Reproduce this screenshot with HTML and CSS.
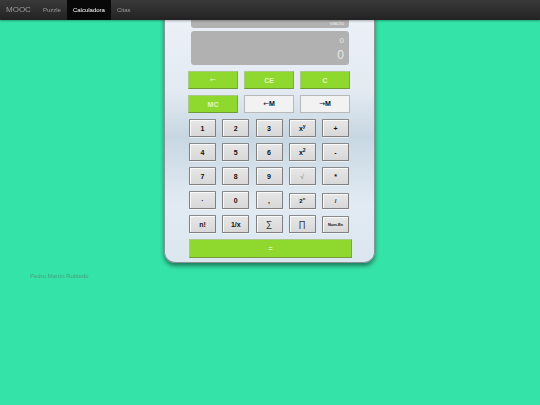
FILE: index.html
```html
<!DOCTYPE html>
<html lang="es">
<head>
<meta charset="utf-8">
<title>Calculadora</title>
<link rel="stylesheet" href="styles.css">
</head>
<body>
<nav class="navbar">
  <span class="brand">MOOC</span>
  <a class="nav-link">Puzzle</a>
  <a class="nav-link active">Calculadora</a>
  <a class="nav-link">Citas</a>
</nav>
<main class="page">
  <div class="calc">
    <div class="display display-top"><span class="small">vacío</span></div>
    <div class="display display-main">
      <span class="mem">0</span>
      <span class="value">0</span>
    </div>
    <div class="row3">
      <button class="btn green"><span class="arrow">←</span></button>
      <button class="btn green">CE</button>
      <button class="btn green">C</button>
    </div>
    <div class="row3">
      <button class="btn green">MC</button>
      <button class="btn white"><span class="arrow">←</span>M</button>
      <button class="btn white"><span class="arrow">→</span>M</button>
    </div>
    <div class="keys">
      <button class="key">1</button>
      <button class="key">2</button>
      <button class="key">3</button>
      <button class="key">x<sup>y</sup></button>
      <button class="key">+</button>
      <button class="key">4</button>
      <button class="key">5</button>
      <button class="key">6</button>
      <button class="key">x<sup>2</sup></button>
      <button class="key">-</button>
      <button class="key">7</button>
      <button class="key">8</button>
      <button class="key">9</button>
      <button class="key light">√</button>
      <button class="key">*</button>
      <button class="key">·</button>
      <button class="key">0</button>
      <button class="key">,</button>
      <button class="key small-key">2<sup>n</sup></button>
      <button class="key small-key">/</button>
      <button class="key">n!</button>
      <button class="key">1/x</button>
      <button class="key sym">∑</button>
      <button class="key sym">∏</button>
      <button class="key tiny">Num.En</button>
    </div>
    <button class="btn green equals">=</button>
  </div>
  <footer class="footer">Pedro Martín Robledo</footer>
</main>
</body>
</html>
```

FILE: styles.css
```css
* { box-sizing: border-box; }
html, body {
  margin: 0;
  padding: 0;
  background: #34e3a7;
  font-family: "Liberation Sans", Arial, sans-serif;
}
.navbar {
  position: fixed;
  top: 0;
  left: 0;
  right: 0;
  height: 20px;
  background: linear-gradient(#3a3a3a, #222);
  display: flex;
  align-items: stretch;
  padding-left: 6px;
  z-index: 10;
  box-shadow: 0 1px 2px rgba(0,0,0,0.3);
}
.brand {
  color: #9d9d9d;
  font-size: 8px;
  line-height: 20px;
  margin-right: 6px;
}
.nav-link {
  color: #9d9d9d;
  font-size: 6px;
  line-height: 20px;
  padding: 0 6px;
}
.nav-link.active {
  color: #fff;
  background: #080808;
}
.calc {
  width: 211px;
  margin-left: 164px;
  padding: 8px 24px 4px 24px;
  background: linear-gradient(#eef2f8 0%, #e3eaf2 35%, #c7d7e2 52%, #e2ebf3 78%, #dbe6ef 100%);
  border: 1px solid #8a9298;
  border-top: none;
  border-radius: 0 0 11px 11px;
  box-shadow: 0 3px 4px rgba(0,0,0,0.45);
  display: flex;
  flex-direction: column;
}
.display {
  background: #b1b1b1;
  border-radius: 3px;
  color: #e8e8e8;
  text-align: right;
  margin: 0 1px 0 2px;
  display: flex;
  flex-direction: column;
  align-items: flex-end;
  padding: 0 5px;
}
.display-top {
  height: 20px;
  justify-content: flex-end;
  border-radius: 0 0 3px 3px;
}
.display-top .small {
  font-size: 6px;
  line-height: 8px;
  padding-bottom: 1px;
}
.display-main {
  height: 34px;
  margin-top: 3px;
  justify-content: center;
}
.display-main .mem {
  font-size: 8px;
  line-height: 15px;
}
.display-main .value {
  font-size: 12px;
  line-height: 15px;
}
.row3 {
  display: grid;
  grid-template-columns: repeat(3, 1fr);
  gap: 6px;
  margin-top: 6px;
  margin-left: -1px;
}
.btn {
  height: 18px;
  font-family: "Liberation Sans", Arial, sans-serif;
  font-size: 7px;
  font-weight: bold;
  padding: 0;
  border-radius: 0;
}
.arrow {
  font-family: "DejaVu Sans", sans-serif;
  font-weight: normal;
  font-size: 7px;
}
.green {
  background: #8fd92e;
  color: #e2f4c4;
  border: 1px solid #a9c88a;
  border-bottom-color: #6e9c36;
  border-right-color: #7aa846;
}
.white {
  background: #f2f2f2;
  color: #111;
  border: 1px solid #b9b9b9;
}
.keys {
  display: grid;
  grid-template-columns: repeat(5, 27px);
  justify-content: space-between;
  row-gap: 6px;
  margin-top: 6px;
  padding: 0 1px 0 0;
}
.key {
  height: 18px;
  padding: 0;
  background: linear-gradient(#e7e7e7, #d8d8d8);
  border: 1px solid #808080;
  border-top-color: #8a8a8a;
  box-shadow: inset 1px 1px 0 #fafafa, 0 1px 0 rgba(255,255,255,0.6);
  font-family: "Liberation Sans", Arial, sans-serif;
  font-size: 7px;
  font-weight: bold;
  color: #111;
  border-radius: 1px;
}
.key sup {
  font-size: 5px;
  line-height: 0;
}
.key.light {
  color: #888;
  font-weight: normal;
}
.key.small-key {
  height: 16px;
  margin-top: 2px;
  font-size: 6px;
}
.key.small-key sup { font-size: 4px; }
.key.sym {
  font-size: 9px;
  font-weight: normal;
  color: #333;
}
.key.tiny {
  font-size: 4px;
  height: 17px;
  margin-top: 1px;
}
.equals {
  margin-top: 6px;
  width: 163px;
  height: 19px;
  color: #e2f4c4;
}
.footer {
  margin-left: 30px;
  margin-top: 10px;
  font-size: 6px;
  color: #4f9d7f;
}
```
